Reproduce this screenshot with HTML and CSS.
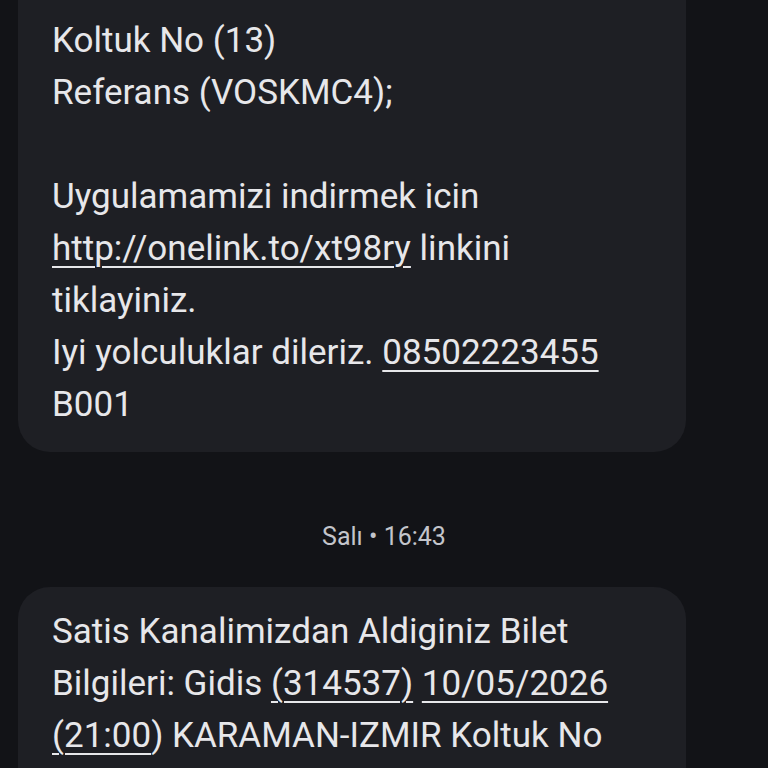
FILE: index.html
```html
<!DOCTYPE html>
<html lang="tr">
<head>
<meta charset="utf-8">
<link rel="stylesheet" href="styles.css">
</head>
<body>
<main class="thread">
  <div class="bubble bubble-first">
    <p class="msg">KARAMAN-IZMIR<br>Koltuk No (13)<br>Referans (VOSKMC4);<br><br>Uygulamamizi indirmek icin<br><a class="lnk">http://onelink.to/xt98ry</a> linkini<br>tiklayiniz.<br>Iyi yolculuklar dileriz. <a class="lnk">08502223455</a><br>B001</p>
  </div>
  <div class="stamp">Salı • 16:43</div>
  <div class="bubble">
    <p class="msg">Satis Kanalimizdan Aldiginiz Bilet<br>Bilgileri: Gidis <a class="lnk">(314537)</a> <a class="lnk">10/05/2026</a><br><a class="lnk">(21:00</a>) KARAMAN-IZMIR Koltuk No<br>(13)</p>
  </div>
</main>
</body>
</html>
```
FILE: styles.css
```css
html, body {
  margin: 0;
  padding: 0;
  background: #121317;
  height: 768px;
  overflow: hidden;
}
.thread {
  display: flex;
  flex-direction: column;
  align-items: flex-start;
  padding: 0 82px 0 18px;
  margin-top: -56px;
  font-family: Roboto, "Noto Sans", sans-serif;
}
.bubble {
  box-sizing: border-box;
  width: 668px;
  background: #1e1f24;
  border-radius: 32px;
  padding: 19px 34px 21px;
}
.msg {
  margin: 0;
  color: #e7e7ea;
  font-size: 35px;
  line-height: 52px;
  white-space: nowrap;
}
.lnk {
  color: inherit;
  text-decoration: underline;
  text-decoration-thickness: 2px;
  text-underline-offset: 6px;
}
.stamp {
  width: 732px;
  text-align: center;
  color: #c3c5cb;
  font-size: 25px;
  line-height: 30px;
  margin: 70px 0 35px;
}
```
